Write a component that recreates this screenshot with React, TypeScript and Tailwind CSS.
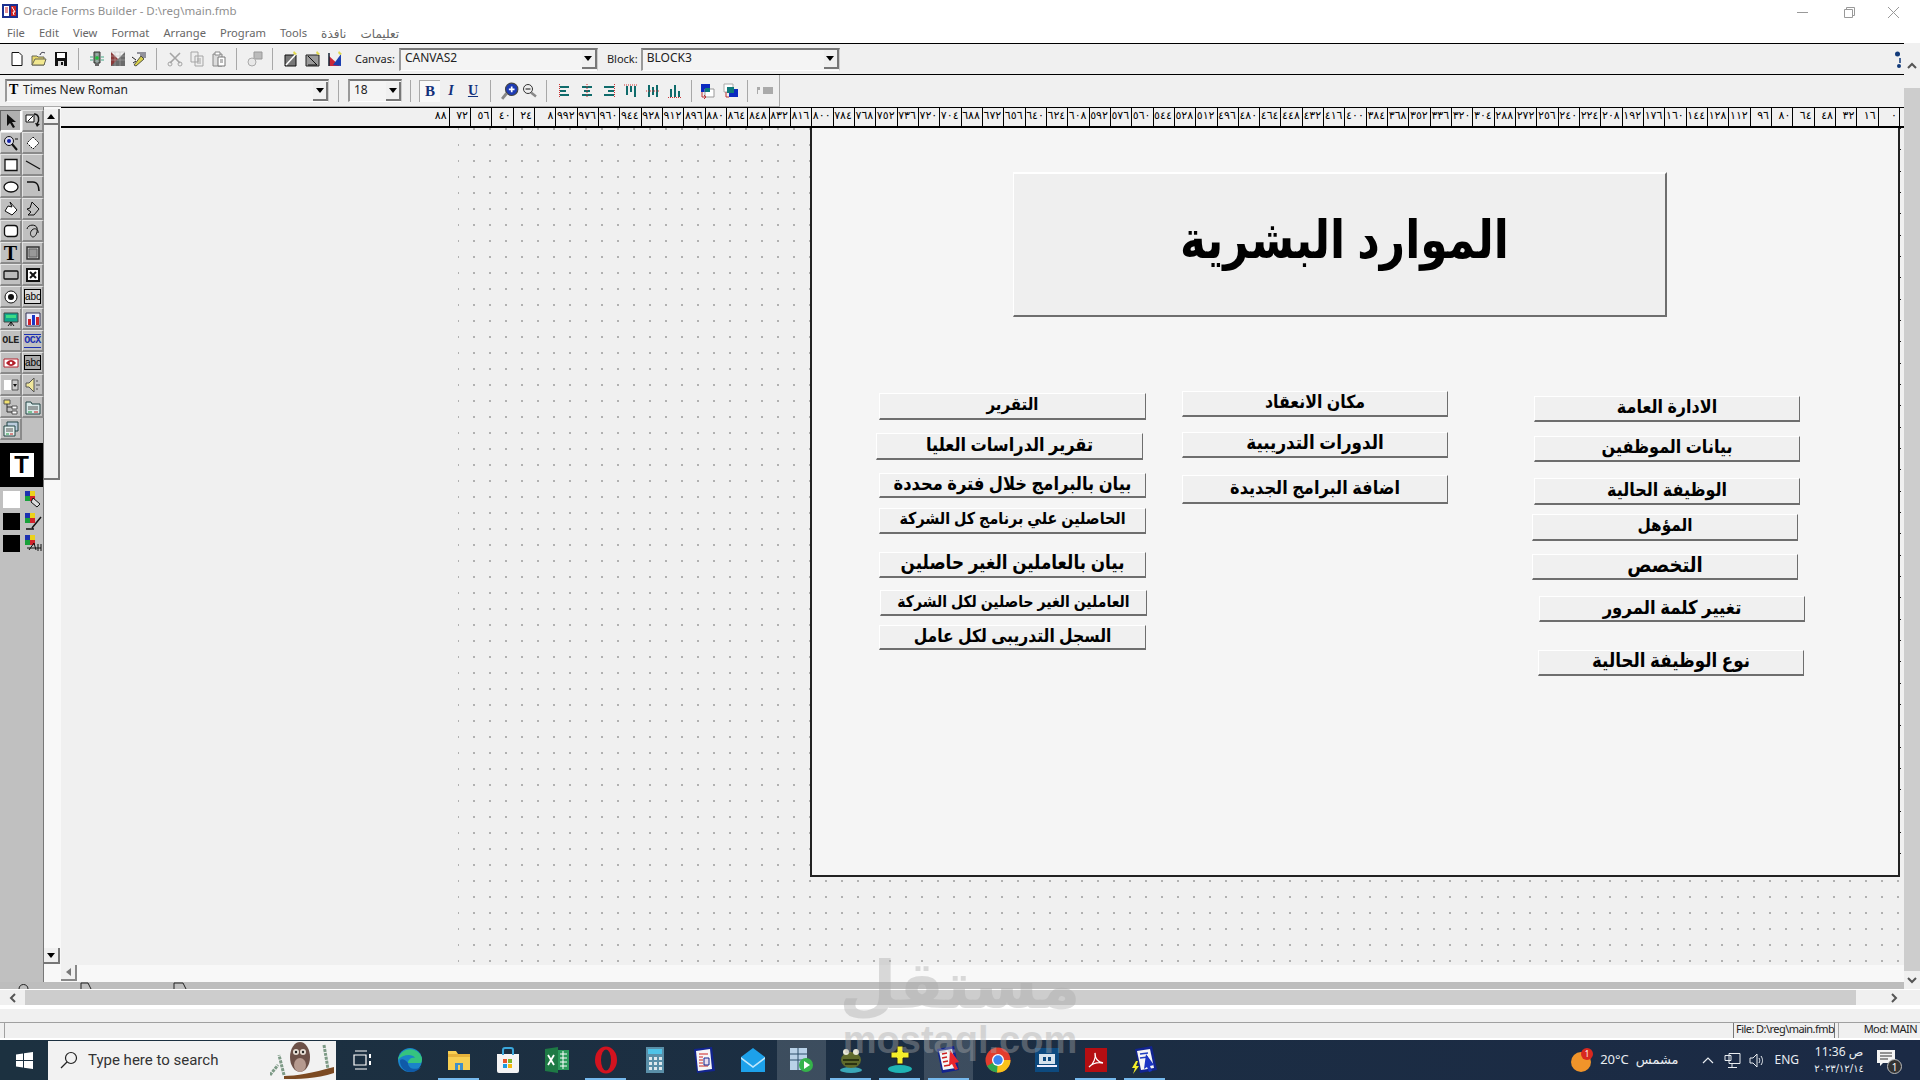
import React from 'react';

const uiFont = "font-['Noto_Sans','DejaVu_Sans',sans-serif]";
const arabicFont = "font-['Liberation_Sans','DejaVu_Sans',sans-serif]";

const toArabicDigits = (value: number) =>
  String(value).replace(/\d/g, (d) => '٠١٢٣٤٥٦٧٨٩'[Number(d)]);

const rulerLabels: string[] = [];
for (let v = 0; v <= 1088; v += 16) {
  rulerLabels.push(toArabicDigits(v >= 1000 ? v % 1000 : v));
}

const Icon: React.FC<{ size?: number; children: React.ReactNode }> = ({ size = 16, children }) => (
  <svg width={size} height={size} viewBox="0 0 16 16" className="shrink-0">
    {children}
  </svg>
);

const Sep: React.FC = () => <div className="w-px h-[22px] bg-[#a8a8a8] shrink-0" />;

const Combo: React.FC<{ text: string; className: string; lead?: React.ReactNode }> = ({ text, className, lead }) => (
  <div className={`flex items-center h-[23px] bg-[#f4f4f4] border-t-2 border-l-2 border-t-[#777] border-l-[#999] border-r border-b border-r-[#ccc] border-b-white shrink-0 ${className}`}>
    {lead}
    <span className="flex-1 pl-1 pb-[3px] text-[12px] text-[#222] whitespace-nowrap">{text}</span>
    <div className="w-[15px] h-[19px] bg-[#f0f0f0] border-b-2 border-r-2 border-b-[#777] border-r-[#777] flex items-center justify-center">
      <svg width="8" height="5" viewBox="0 0 8 5"><path d="M0 0h8L4 5z" fill="#000" /></svg>
    </div>
  </div>
);

/* top toolbar */
const NewIcon = () => <Icon><path d="M3 1.5h7l3 3v10H3z" fill="#fff" stroke="#111" /></Icon>;
const OpenIcon = () => <Icon><path d="M1 5h5l1 1h6v8H1z" fill="#e8d86a" stroke="#665" /><path d="M1 14l3-6h11l-2 6z" fill="#f2e88f" stroke="#665" /><path d="M9 4c1-3 3-3 5-2" fill="none" stroke="#223" /></Icon>;
const SaveIcon = () => <Icon><path d="M2 1h12v14H2z" fill="#111" /><path d="M4 2h8v5H4z" fill="#fff" /><path d="M5 10h6v5H5z" fill="#ddd" /><path d="M8 11h2v3H8z" fill="#111" /></Icon>;
const RunIcon = () => <Icon><path d="M5 1h6v11H5z" fill="#7b8c7b" stroke="#333" /><circle cx="8" cy="3.5" r="1.5" fill="#9aa" /><circle cx="8" cy="7" r="1.8" fill="#19c23b" /><circle cx="8" cy="10.3" r="1.5" fill="#9aa" /><path d="M6 12h4v3H6z" fill="#666" /><path d="M1 6h3M12 6h3M1 9h3M12 9h3" stroke="#4a8" /></Icon>;
const CompileIcon = () => <Icon><path d="M1 1l14 14H1z" fill="#8b3a3a" /><path d="M15 1L1 15h14z" fill="#6b6b6b" /><path d="M1 1h14M1 5h14M1 9h14M5 1v14M10 1v14" stroke="#bbb" strokeWidth=".5" /></Icon>;
const DebugIcon = () => <Icon><path d="M3 14L10 5l3 3-8 7z" fill="#d9d04a" stroke="#554" /><path d="M6 2h9M9 4h6M11 6h4" stroke="#334" /><path d="M1 6l4 3M2 12l3-2" stroke="#222" /></Icon>;
const CutIcon = () => <Icon><path d="M3 2l10 10M13 2L3 12" stroke="#a5a5a5" strokeWidth="1.6" /><circle cx="3" cy="13" r="2" fill="none" stroke="#a5a5a5" /><circle cx="13" cy="13" r="2" fill="none" stroke="#a5a5a5" /></Icon>;
const CopyIcon = () => <Icon><path d="M2 1h7v10H2zM6 5h8v10H6z" fill="#eee" stroke="#a5a5a5" /><path d="M8 8h4M8 10h4M8 12h4" stroke="#a5a5a5" /></Icon>;
const PasteIcon = () => <Icon><path d="M2 3h9v12H2z" fill="#ddd" stroke="#888" /><path d="M4 1h5v3H4z" fill="#fff" stroke="#888" /><path d="M7 6h7v9H7z" fill="#fff" stroke="#777" /><path d="M9 9h3M9 11h3" stroke="#777" /></Icon>;
const LinkIcon = () => <Icon><path d="M7 1h8v7H7z" fill="#bbb" stroke="#999" /><circle cx="5" cy="11" r="4" fill="#e8e8e8" stroke="#aaa" /></Icon>;
const EditAIcon = () => <Icon><path d="M2 4h11v11H2z" fill="#777" stroke="#111" /><path d="M3 14L13 3" stroke="#fff" strokeWidth="1.5" /><path d="M11 0l3 3-2 1-2-2z" fill="#e2d94d" /></Icon>;
const EditBIcon = () => <Icon><path d="M1 4h13v11H1z" fill="#9a9a9a" stroke="#222" /><path d="M3 5l9 9M3 14h9" stroke="#111" /><path d="M12 0l3 3-2 1-2-2z" fill="#e2d94d" /></Icon>;
const EditCIcon = () => <Icon><path d="M2 15V5l11 10z" fill="#c9283a" /><path d="M2 2v13" stroke="#123" strokeWidth="1.5" /><path d="M6 14L14 3v12z" fill="#1c3fb0" /><path d="M12 0l3 3-2 1-2-2z" fill="#e2d94d" /></Icon>;
const HelpIcon = () => <svg width="7" height="18" viewBox="0 0 7 18"><circle cx="3.5" cy="3" r="2.5" fill="#123a7a" /><path d="M6 7v5" stroke="#123a7a" strokeWidth="1.5" /><circle cx="5" cy="15" r="2" fill="#123a7a" /></svg>;

/* second toolbar */
const FontIcon = () => <span className="w-[10px] ml-[2px] pb-[3px] text-[14px] leading-none font-bold font-['Liberation_Serif',serif] text-black shrink-0">T</span>;
const ZoomIn = () => <Icon size={18}><circle cx="9.5" cy="6.5" r="5.5" fill="#1d3bb4" stroke="#444" /><path d="M7 6.5h5M9.5 4v5" stroke="#fff" strokeWidth="1.5" /><path d="M5 10l-4 5" stroke="#888" strokeWidth="2.5" /></Icon>;
const ZoomOut = () => <Icon><circle cx="6" cy="6" r="4.5" fill="#eee" stroke="#333" /><path d="M3.5 6h5" stroke="#111" /><path d="M9 9.5l5 4" stroke="#888" strokeWidth="2.5" /></Icon>;
const Align: React.FC<{ bars: string; line: string }> = ({ bars, line }) => (
  <Icon>
    <path d={bars} fill="#0f6b6b" />
    <path d={line} stroke="#c33" strokeDasharray="1 1" />
  </Icon>
);
const LayerA = () => <Icon><path d="M1 1h9v8H1z" fill="#0b2ac0" /><path d="M5 6h9v8H5z" fill="#fff" stroke="#999" /><path d="M2 9v5h4M4 12l2 2-2 2" fill="none" stroke="#b33" /><path d="M5 5h5v4H5z" fill="#0e7a7a" /></Icon>;
const LayerB = () => <Icon><path d="M1 1h9v8H1z" fill="#fff" stroke="#aaa" /><path d="M6 6h9v8H6z" fill="#0b2ac0" /><path d="M4 4h7v6H4z" fill="#0e7a7a" /><path d="M3 9v5h3" fill="none" stroke="#b33" /></Icon>;
const PmIcon = () => <svg width="18" height="10" viewBox="0 0 18 10"><path d="M1 1h3v3H2v4H1zM7 1h10v7H7z" fill="#aaa" /></svg>;

/* tool palette */
const Cell: React.FC<{ children?: React.ReactNode; pressed?: boolean }> = ({ children, pressed }) => (
  <div className={`w-[22px] h-[22px] flex items-center justify-center border-t border-l border-b-2 border-r-2 ${pressed ? 'border-t-[#666] border-l-[#666] border-b-white border-r-white bg-[#b0b0b0]' : 'border-t-[#e4e4e4] border-l-[#e4e4e4] border-b-[#8a8a8a] border-r-[#8a8a8a]'}`}>
    {children}
  </div>
);

const tools: React.ReactNode[] = [
  <Icon key="0"><path d="M4 1v12l3-3 3 5 2-1-3-5h4z" fill="#111" /></Icon>,
  <Icon key="1"><path d="M1 2h8v7H1z" fill="#fff" stroke="#111" /><path d="M3 8l5-5" stroke="#111" /><path d="M9 1c5 0 6 6 3 10" fill="none" stroke="#111" strokeWidth="1.5" /><path d="M10 10l2 4 3-3z" fill="#111" /></Icon>,
  <Icon key="2"><circle cx="6" cy="6" r="4.5" fill="#dde" stroke="#111" /><circle cx="6" cy="6" r="2" fill="#1422a8" /><path d="M9 9l5 6" stroke="#111" strokeWidth="2" /><path d="M12 4h3" stroke="#111" /></Icon>,
  <Icon key="3"><path d="M8 2l6 6-6 6-6-6z" fill="#fff" stroke="#111" strokeDasharray="2 1" /></Icon>,
  <Icon key="4"><path d="M2 2.5h12v11H2z" fill="#fff" stroke="#111" strokeWidth="1.3" /></Icon>,
  <Icon key="5"><path d="M1 4l14 8" stroke="#111" strokeWidth="1.3" /></Icon>,
  <Icon key="6"><ellipse cx="8" cy="8" rx="7" ry="5" fill="#fff" stroke="#111" strokeWidth="1.3" /></Icon>,
  <Icon key="7"><path d="M2 3h6c4 0 6 4 6 9" fill="none" stroke="#111" strokeWidth="1.6" /></Icon>,
  <Icon key="8"><path d="M7 1l7 8-5 5-7-4 3-5 4 1z" fill="#fff" stroke="#111" /></Icon>,
  <Icon key="9"><path d="M7 1l7 7-5 6H3l3-3-4-3 3-1z" fill="none" stroke="#111" /></Icon>,
  <Icon key="10"><rect x="1.5" y="2.5" width="13" height="11" rx="3" fill="#fff" stroke="#111" strokeWidth="1.3" /></Icon>,
  <Icon key="11"><path d="M2 6c1-5 9-5 10-1 1 5-2 9-4 9S4 10 7 7s7 0 6 3" fill="none" stroke="#111" /></Icon>,
  <span key="12" className="text-[20px] leading-none font-bold font-['Liberation_Serif',serif] text-black">T</span>,
  <Icon key="13"><path d="M2 2h12v12H2z" fill="none" stroke="#333" strokeWidth="1.5" /><path d="M4 4h8v8H4z" fill="#999" stroke="#666" /></Icon>,
  <Icon key="14"><rect x="1" y="4" width="14" height="8" rx="1" fill="#bbb" stroke="#111" strokeWidth="1.3" /></Icon>,
  <Icon key="15"><path d="M2 2h12v12H2z" fill="#fff" stroke="#111" strokeWidth="2" /><path d="M5 5l6 6M11 5l-6 6" stroke="#111" strokeWidth="2" /></Icon>,
  <Icon key="16"><circle cx="8" cy="8" r="6" fill="#fff" stroke="#111" /><circle cx="8" cy="8" r="3" fill="#111" /></Icon>,
  <span key="17" className="w-[17px] border border-black bg-[#ddd] text-[10px] leading-[13px] text-center font-['Liberation_Sans',sans-serif] text-black">abc</span>,
  <Icon key="18"><path d="M1 2h14v9H1z" fill="#11a58c" stroke="#444" /><path d="M3 4h10v3H3z" fill="#3ddc84" /><path d="M8 11l-3 4M8 11l3 4M8 11v4" stroke="#111" /></Icon>,
  <Icon key="19"><path d="M1 2h14v13H1z" fill="#eef" stroke="#335" /><path d="M3 8h3v6H3z" fill="#d1232b" /><path d="M7 4h3v10H7z" fill="#1b35c4" /><path d="M11 6h3v8h-3z" fill="#d1232b" /></Icon>,
  <span key="20" className="text-[10px] leading-none tracking-tighter font-bold font-['Liberation_Mono',monospace] text-[#222]">OLE</span>,
  <span key="21" className="text-[10px] leading-[12px] border-y border-[#1b2fb0] tracking-tighter font-bold font-['Liberation_Mono',monospace] text-[#1b2fb0]">OCX</span>,
  <Icon key="22"><path d="M1 4h14v8H1z" fill="#fff" stroke="#b3202c" /><path d="M3 8c3-4 7-4 10 0-3 4-7 4-10 0z" fill="#b3202c" /><circle cx="8" cy="8" r="1.3" fill="#fff" /></Icon>,
  <span key="23" className="w-[17px] border border-black bg-[#aaa] text-[10px] leading-[13px] text-center font-['Liberation_Sans',sans-serif] text-black">abc</span>,
  <Icon key="24"><path d="M1 3h14v10H1z" fill="#fff" /><path d="M9 3h6v10H9z" fill="#ccc" stroke="#555" /><path d="M10 7h4l-2 3z" fill="#111" /></Icon>,
  <Icon key="25"><path d="M1 6h3l5-5v14l-5-5H1z" fill="#f0e79c" stroke="#555" /><path d="M11 4h2M11 8h4M11 12h2" stroke="#555" /></Icon>,
  <Icon key="26"><path d="M1 1h6v4H1z" fill="#f0e070" stroke="#555" /><path d="M9 7h5v3H9zM9 12h5v3H9z" fill="#fff" stroke="#555" /><path d="M4 5v8h5M4 8h5" fill="none" stroke="#333" /></Icon>,
  <Icon key="27"><path d="M1 3h5l1 2h8v10H1z" fill="#d8e8e8" stroke="#244" /><path d="M3 8h10M3 10h10" stroke="#555" /><path d="M3 13h4" stroke="#1c9a3a" /><path d="M9 13h4" stroke="#c22" /></Icon>,
  <Icon key="28"><path d="M4 1h11v9H4z" fill="#bcd" stroke="#244" /><path d="M1 5h11v10H1z" fill="#e4f0ee" stroke="#244" /><path d="M3 8h7M3 10h7" stroke="#555" /><path d="M3 13h3" stroke="#1c9a3a" /><path d="M7 13h3" stroke="#c22" /></Icon>,
];

const Swatch: React.FC<{ color: string }> = ({ color }) => <div className={`w-[17px] h-[17px] ${color}`} />;
const PaletteIcon: React.FC<{ tool: React.ReactNode }> = ({ tool }) => (
  <svg width="18" height="18" viewBox="0 0 18 18">
    <path d="M1 1h5v5H1z" fill="#1b2fb0" />
    <path d="M6 1h5v5H6z" fill="#ecd21b" />
    <path d="M1 6h5v5H1z" fill="#18a03a" />
    <path d="M6 6h5v5H6z" fill="#d1232b" />
    {tool}
  </svg>
);

/* canvas buttons */
const FormButton: React.FC<{ text: string; className: string }> = ({ text, className }) => (
  <div dir="rtl" className={`absolute flex items-center justify-center pb-[3px] bg-[#f0f0f0] border-t border-l border-t-white border-l-white border-b-2 border-r border-b-[#6e6e6e] border-r-[#6e6e6e] font-bold text-black whitespace-nowrap ${arabicFont} ${className}`}>
    <span className="inline-block scale-y-[1.15]">{text}</span>
  </div>
);

/* taskbar */
const TaskSlot: React.FC<{ children: React.ReactNode; open?: boolean; active?: boolean }> = ({ children, open, active }) => (
  <div className={`relative w-[49px] h-[40px] flex items-center justify-center shrink-0 ${active ? 'bg-[#ffffff26]' : ''}`}>
    {children}
    {open && <div className="absolute bottom-0 left-[4px] right-[4px] h-[2px] bg-[#76b9ed]" />}
  </div>
);

const App: React.FC = () => {
  return (
    <div className={`relative w-[1920px] h-[1080px] overflow-hidden flex flex-col bg-[#f0f0f0] ${uiFont}`}>
      {/* Title bar */}
      <div className="h-[24px] bg-white flex items-center shrink-0 pl-[2px]">
        <svg width="16" height="16" viewBox="0 0 16 16" className="mb-[3px]">
          <path d="M0 1h16v14H0z" fill="#1b2f8f" />
          <path d="M2 3h5v10H2z" fill="#fff" />
          <path d="M3 5h3M3 7h3M3 9h3" stroke="#c22" />
          <path d="M9 3h5v10H9z" fill="#c22" />
          <path d="M10 4l3 5-2 0 1 3" stroke="#fff" fill="none" />
        </svg>
        <span className="ml-[5px] mb-[2px] text-[11.5px] text-[#8f8f8f]">Oracle Forms Builder - D:\reg\main.fmb</span>
        <div className="ml-auto flex items-center">
          <div className="w-[47px] flex justify-center"><svg width="11" height="11" viewBox="0 0 11 11"><path d="M0 5.5h11" stroke="#999" /></svg></div>
          <div className="w-[47px] flex justify-center"><svg width="11" height="11" viewBox="0 0 11 11"><path d="M.5 2.500h8v8h-8zM2.500 2.500v-2h8v8h-2" fill="none" stroke="#999" /></svg></div>
          <div className="w-[47px] pr-[6px] flex justify-center"><svg width="11" height="11" viewBox="0 0 11 11"><path d="M0 0l11 11M11 0L0 11" stroke="#999" /></svg></div>
        </div>
      </div>

      {/* Menu bar */}
      <div className="h-[19px] bg-white flex items-center pl-[7px] gap-[14px] text-[11.2px] text-[#666] shrink-0">
        <span>File</span>
        <span>Edit</span>
        <span>View</span>
        <span>Format</span>
        <span>Arrange</span>
        <span>Program</span>
        <span>Tools</span>
        <span className="text-[12px]">نافذة</span>
        <span className="text-[12px]">تعليمات</span>
      </div>

      <div className="flex h-[946px] shrink-0">
        <div className="w-[1904px] flex flex-col">
          {/* Main toolbar */}
          <div className="relative h-[32px] flex items-center pl-[9px] border-t border-b border-black shrink-0">
            <div className="flex items-center gap-[6px]">
              <NewIcon /><OpenIcon /><SaveIcon />
            </div>
            <div className="ml-[9px] mr-[10px]"><Sep /></div>
            <div className="flex items-center gap-[5px]">
              <RunIcon /><CompileIcon /><DebugIcon />
            </div>
            <div className="ml-[9px] mr-[10px]"><Sep /></div>
            <div className="flex items-center gap-[6px]">
              <CutIcon /><CopyIcon /><PasteIcon />
            </div>
            <div className="ml-[9px] mr-[10px]"><Sep /></div>
            <LinkIcon />
            <div className="ml-[9px] mr-[10px]"><Sep /></div>
            <div className="flex items-center gap-[6px]">
              <EditAIcon /><EditBIcon /><EditCIcon />
            </div>
            <span className="ml-[12px] mr-[4px] text-[11px] text-[#222]">Canvas:</span>
            <Combo text="CANVAS2" className="w-[199px]" />
            <span className="ml-[9px] mr-[3px] text-[11px] text-[#222]">Block:</span>
            <Combo text="BLOCK3" className="w-[199px]" />
            <div className="absolute right-[3px] top-[7px]"><HelpIcon /></div>
          </div>

          {/* Format toolbar */}
          <div className="h-[32px] flex shrink-0">
            <div className="w-[780px] flex items-center pl-[5px] border-r border-b border-r-[#aaa] border-b-[#aaa]">
              <Combo text="Times New Roman" lead={<FontIcon />} className="w-[324px]" />
              <div className="mx-[9px]"><Sep /></div>
              <Combo text="18" className="w-[54px]" />
              <div className="mx-[8px]"><Sep /></div>
              <div className="w-[21px] h-[22px] bg-[#f8f8f8] border-l border-t border-[#aaa] flex items-center justify-center text-[15px] font-bold font-['Liberation_Serif',serif] text-[#12307a]">B</div>
              <div className="w-[22px] text-center text-[14px] italic font-bold font-['Liberation_Serif',serif] text-[#12307a]">I</div>
              <div className="w-[22px] text-center text-[14px] underline font-bold font-['Liberation_Serif',serif] text-[#12307a]">U</div>
              <div className="ml-[6px] mr-[10px]"><Sep /></div>
              <ZoomIn />
              <div className="ml-[3px]"><ZoomOut /></div>
              <div className="mx-[8px]"><Sep /></div>
              <div className="ml-[2px] flex items-center gap-[6px]">
                <Align bars="M3 3h9v2H3zM3 7h6v2H3zM3 11h9v2H3z" line="M2.5 1v14" />
                <Align bars="M3 3h10v2H3zM5 7h6v2H5zM3 11h10v2H3z" line="M8 1v14" />
                <Align bars="M3 3h10v2H3zM7 7h6v2H7zM3 11h10v2H3z" line="M13.5 1v14" />
                <Align bars="M3 3h2v9H3zM7 3h2v6H7zM11 3h2v11h-2z" line="M1 2h14" />
                <Align bars="M3 2h2v12H3zM7 4h2v8H7zM11 2h2v12h-2z" line="M1 8h14" />
                <Align bars="M3 6h2v8H3zM7 2h2v12H7zM11 8h2v6h-2z" line="M1 14.5h14" />
              </div>
              <div className="mx-[8px]"><Sep /></div>
              <div className="flex items-center gap-[7px]">
                <LayerA /><LayerB />
              </div>
              <div className="mx-[8px]"><Sep /></div>
              <PmIcon />
            </div>
          </div>

          {/* Builder workspace */}
          <div className="flex h-[875px] shrink-0">
            {/* Tool palette */}
            <div className="w-[44px] bg-[#c0c0c0] border-r border-r-[#777] shrink-0 pt-[3px]">
              <div className="grid grid-cols-2 w-[44px]">
                {tools.map((tool, i) => (
                  <Cell key={i} pressed={i === 0}>{tool}</Cell>
                ))}
              </div>
              <div className="mt-[3px] h-[44px] bg-black flex items-center justify-center">
                <div className="w-[24px] h-[24px] bg-white flex items-center justify-center text-[24px] leading-none font-black font-['Liberation_Sans',sans-serif] text-black">T</div>
              </div>
              <div className="pl-[3px] pt-[3px] flex flex-col gap-[4px]">
                <div className="flex items-center gap-[4px]">
                  <Swatch color="bg-white" />
                  <PaletteIcon tool={<path d="M9 8l7 6-3 3-6-5z" fill="#ddd" stroke="#111" />} />
                </div>
                <div className="flex items-center gap-[4px]">
                  <Swatch color="bg-black" />
                  <PaletteIcon tool={<path d="M8 16l9-11M2 17h8" stroke="#111" strokeWidth="1.5" />} />
                </div>
                <div className="flex items-center gap-[4px]">
                  <Swatch color="bg-black" />
                  <PaletteIcon tool={<path d="M5 16l5-7 2 7M14 10v7M17 10v7M3 14h14" fill="none" stroke="#111" />} />
                </div>
              </div>
            </div>

            {/* Vertical scroller */}
            <div className="w-[17px] flex flex-col shrink-0 bg-[#f8f8f8]">
              <div className="w-[16px] h-[16px] mt-[2px] bg-[#f0f0f0] border-b-2 border-r-2 border-[#777] flex items-center justify-center">
                <svg width="8" height="5" viewBox="0 0 8 5"><path d="M0 5h8L4 0z" fill="#000" /></svg>
              </div>
              <div className="w-[16px] h-[355px] bg-[#f0f0f0] border-b-2 border-r-2 border-[#777]" />
              <div className="flex-1" />
              <div className="w-[16px] h-[16px] mb-[18px] bg-[#f0f0f0] border-b-2 border-r-2 border-[#777] flex items-center justify-center">
                <svg width="8" height="5" viewBox="0 0 8 5"><path d="M0 0h8L4 5z" fill="#000" /></svg>
              </div>
            </div>

            {/* Ruler and canvas */}
            <div className="flex-1 flex flex-col min-w-0">
              <div className="h-[21px] flex flex-row-reverse border-t border-b-2 border-black pr-[4px] shrink-0 font-['DejaVu_Sans',sans-serif]">
                {rulerLabels.map((label, i) => (
                  <div key={i} className="w-[21.33px] h-full border-r border-black text-right pr-[2px] text-[11px] leading-[16px] text-black whitespace-nowrap overflow-hidden shrink-0">
                    {label}
                  </div>
                ))}
              </div>
              <div className="flex flex-1 min-h-0">
                <div className="w-[397px] shrink-0" />
                <div className="flex-1 min-w-0 bg-[radial-gradient(circle,#222_0.5px,transparent_0.8px)] bg-[size:16px_16px] bg-[position:-8px_9px]">
                  <div className="ml-[352px] w-[1090px] h-[749px] relative bg-[#f5f5f5] border-l-2 border-b-2 border-r-2 border-[#222]">
                    {/* Vertical ruler marks */}
                    <div className="absolute left-full top-0 w-[3px] h-full bg-[repeating-linear-gradient(to_bottom,#222_0_1px,transparent_1px_21.33px)]" />

                    {/* Title block */}
                    <div dir="rtl" className={`absolute left-[201px] top-[44px] w-[654px] h-[145px] flex items-center justify-center pb-[10px] pl-[10px] bg-[#efefef] border-t-2 border-l border-t-white border-l-white border-b-2 border-r-2 border-b-[#6e6e6e] border-r-[#6e6e6e] text-[44px] font-bold text-black ${arabicFont}`}>
                      <span className="inline-block scale-y-[1.2]">الموارد البشرية</span>
                    </div>

                    <FormButton text="التقرير" className="left-[67px] top-[265px] w-[267px] h-[27px] text-[15px]" />
                    <FormButton text="تقرير الدراسات العليا" className="left-[64px] top-[305px] w-[267px] h-[27px] text-[16.2px]" />
                    <FormButton text="بيان بالبرامج خلال فترة محددة" className="left-[67px] top-[345px] w-[267px] h-[25px] text-[16.3px]" />
                    <FormButton text="الحاصلين علي برنامج كل الشركة" className="left-[67px] top-[380px] w-[267px] h-[26px] text-[14.3px]" />
                    <FormButton text="بيان بالعاملين الغير حاصلين" className="left-[67px] top-[424px] w-[267px] h-[26px] text-[16.8px]" />
                    <FormButton text="العاملين الغير حاصلين لكل الشركة" className="left-[68px] top-[462px] w-[267px] h-[26px] text-[14px]" />
                    <FormButton text="السجل التدريبى لكل عامل" className="left-[67px] top-[497px] w-[267px] h-[25px] text-[15.6px]" />

                    <FormButton text="مكان الانعقاد" className="left-[370px] top-[263px] w-[266px] h-[26px] text-[15.8px]" />
                    <FormButton text="الدورات التدريبية" className="left-[370px] top-[304px] w-[266px] h-[26px] text-[16.8px]" />
                    <FormButton text="اضافة البرامج الجديدة" className="left-[370px] top-[347px] w-[266px] h-[29px] text-[16.2px]" />

                    <FormButton text="الادارة العامة" className="left-[722px] top-[268px] w-[266px] h-[26px] text-[16px]" />
                    <FormButton text="بيانات الموظفين" className="left-[722px] top-[308px] w-[266px] h-[26px] text-[16px]" />
                    <FormButton text="الوظيفة الحالية" className="left-[722px] top-[350px] w-[266px] h-[27px] text-[16px]" />
                    <FormButton text="المؤهل" className="left-[720px] top-[386px] w-[266px] h-[27px] text-[15.3px]" />
                    <FormButton text="التخصص" className="left-[720px] top-[426px] w-[266px] h-[26px] text-[18px]" />
                    <FormButton text="تغيير كلمة المرور" className="left-[727px] top-[468px] w-[266px] h-[26px] text-[16.5px]" />
                    <FormButton text="نوع الوظيفة الحالية" className="left-[726px] top-[522px] w-[266px] h-[26px] text-[16.7px]" />
                  </div>
                </div>
              </div>
              {/* Inner horizontal scroller */}
              <div className="h-[17px] bg-[#f8f8f8] shrink-0">
                <div className="w-[16px] h-[16px] bg-[#f0f0f0] border-b-2 border-r-2 border-[#888] flex items-center justify-center">
                  <svg width="5" height="8" viewBox="0 0 5 8"><path d="M5 0v8L0 4z" fill="#777" /></svg>
                </div>
              </div>
            </div>
          </div>

          <div className="relative h-[7px] bg-[#bdbdbd] shrink-0 overflow-hidden">
            <svg width="200" height="7" viewBox="0 0 200 7" className="absolute left-0 top-0">
              <path d="M19 7c0-6 9-6 9 0M81 7V1h7l3 6M174 7V1h9l3 6" fill="none" stroke="#222" />
            </svg>
          </div>
        </div>

        {/* Window scrollbar */}
        <div className="w-[16px] flex flex-col bg-[#f0f0f0]">
          <div className="h-[45px] flex items-center justify-center">
            <svg width="10" height="7" viewBox="0 0 10 7"><path d="M1 6l4-4 4 4" fill="none" stroke="#555" strokeWidth="2" /></svg>
          </div>
          <div className="flex-1 bg-[#cdcdcd]" />
          <div className="h-[18px] flex items-center justify-center">
            <svg width="10" height="7" viewBox="0 0 10 7"><path d="M1 1l4 4 4-4" fill="none" stroke="#555" strokeWidth="2" /></svg>
          </div>
        </div>
      </div>

      {/* Page scrollbar */}
      <div className="h-[1px] bg-white shrink-0" />
      <div className="h-[15px] flex shrink-0">
        <div className="w-[25px] flex items-center justify-center">
          <svg width="7" height="10" viewBox="0 0 7 10"><path d="M6 1L2 5l4 4" fill="none" stroke="#555" strokeWidth="2" /></svg>
        </div>
        <div className="w-[1831px] bg-[#cdcdcd]" />
        <div className="flex-1 flex items-center justify-end pr-[22px]">
          <svg width="7" height="10" viewBox="0 0 7 10"><path d="M1 1l4 4-4 4" fill="none" stroke="#555" strokeWidth="2" /></svg>
        </div>
      </div>
      <div className="h-[4px] bg-white shrink-0" />

      {/* Status bar */}
      <div className="h-[14px] shrink-0 border-b border-[#a0a0a0]" />
      <div className="h-[15px] flex items-center pl-[4px] pr-[3px] shrink-0 text-[11px] text-[#222] leading-none">
        <div className="w-[1729px] h-full border-l border-[#a0a0a0]" />
        <div className="w-[102px] h-full border-l border-r border-[#777] pl-[2px] tracking-tighter whitespace-nowrap">File: D:\reg\main.fmb</div>
        <div className="ml-[3px] flex-1 h-full border-l border-[#aaa] text-right tracking-tighter whitespace-nowrap">Mod: MAIN</div>
      </div>
      <div className="h-[2px] bg-white shrink-0" />

      {/* Windows taskbar */}
      <div className="h-[40px] flex items-center bg-gradient-to-r from-[#1c3140] to-[#1b2a45] shrink-0">
        <div className="w-[48px] flex justify-center shrink-0">
          <svg width="17" height="17" viewBox="0 0 17 17"><path d="M0 2.500l7-1v6.500H0zM8 1.300L17 0v8H8zM0 9h7v6.500l-7-1zM8 9h9v8l-9-1.300z" fill="#fff" /></svg>
        </div>
        <div className="relative w-[288px] h-[39px] bg-[#f2f2f2] flex items-center pl-[12px] shrink-0 overflow-hidden">
          <svg width="18" height="18" viewBox="0 0 18 18"><circle cx="11" cy="7" r="5.500" fill="none" stroke="#222" strokeWidth="1.200" /><path d="M7 11l-6 6" stroke="#222" strokeWidth="1.200" /></svg>
          <span className="ml-[10px] text-[15px] text-[#333] font-['Roboto',sans-serif]">Type here to search</span>
          <svg width="66" height="40" viewBox="0 0 66 40" className="absolute right-0 top-0">
            <path d="M0 34l8-10M14 34L9 14M54 4l4 24" stroke="#7d9a86" strokeWidth="3" strokeDasharray="3 1" />
            <path d="M14 35c12 0 28-3 50-9v6c-18 6-36 6-50 6z" fill="#7c4a22" />
            <ellipse cx="30" cy="16" rx="10" ry="15" fill="#6d5148" />
            <circle cx="26" cy="11" r="3" fill="#e6ddd4" />
            <circle cx="33" cy="11" r="3" fill="#e6ddd4" />
            <circle cx="26" cy="11" r="1.200" fill="#222" />
            <circle cx="33" cy="11" r="1.200" fill="#222" />
            <ellipse cx="30" cy="24" rx="6" ry="7" fill="#b69a8f" />
          </svg>
        </div>

        <TaskSlot>
          <svg width="20" height="20" viewBox="0 0 20 20"><path d="M4 1h12M4 19h12M3 5h12v10H3z" fill="none" stroke="#fff" strokeWidth="1.200" /><path d="M18 4h2v4h-2zM18 11h2v4h-2z" fill="#fff" /></svg>
        </TaskSlot>
        <TaskSlot>
          <svg width="26" height="26" viewBox="0 0 26 26"><circle cx="13" cy="13" r="12" fill="#1a83c9" /><path d="M1 13C2 4 14-2 22 6c3 3 4 7 2 10H11c0-4 4-6 7-5-3-5-13-3-17 2z" fill="#35c37f" /><path d="M11 16c0 5 6 8 13 4-3 4-7 5-10 5-7 0-11-6-11-11 0-2 4-3 8 2z" fill="#0f5aa8" /></svg>
        </TaskSlot>
        <TaskSlot open>
          <svg width="24" height="22" viewBox="0 0 24 22"><path d="M1 2h8l2 3h12v16H1z" fill="#f7cf52" /><path d="M1 5h22v3H1z" fill="#e5b23a" /><path d="M8 14h8v7H8z" fill="#3f8fc9" /><path d="M11 16h2v5h-2z" fill="#f7cf52" /></svg>
        </TaskSlot>
        <TaskSlot>
          <svg width="24" height="26" viewBox="0 0 24 26"><path d="M1 7h22v17a2 2 0 0 1-2 2H3a2 2 0 0 1-2-2z" fill="#f4f4f4" /><path d="M7 8V3a2 2 0 0 1 2-2h6a2 2 0 0 1 2 2v5" fill="none" stroke="#3ba8dc" strokeWidth="2" /><path d="M7 12h4v4H7z" fill="#e8562a" /><path d="M12 12h4v4h-4z" fill="#7eb72b" /><path d="M7 17h4v4H7z" fill="#1a9be0" /><path d="M12 17h4v4h-4z" fill="#f5b90a" /></svg>
        </TaskSlot>
        <TaskSlot>
          <svg width="24" height="26" viewBox="0 0 24 26"><path d="M0 2l13-2v26L0 24z" fill="#1e7a45" /><path d="M13 3h11v20H13z" fill="#2b9a5b" /><path d="M15 7h7M15 11h7M15 15h7M15 19h7M18 4v18" stroke="#fff" /><path d="M3 8l6 10M9 8l-6 10" stroke="#fff" strokeWidth="1.800" /></svg>
        </TaskSlot>
        <TaskSlot open>
          <svg width="24" height="28" viewBox="0 0 24 28"><ellipse cx="12" cy="14" rx="11" ry="13.500" fill="#d3131f" /><ellipse cx="12" cy="14" rx="5" ry="10.500" fill="#1c2d3c" /></svg>
        </TaskSlot>
        <TaskSlot>
          <svg width="18" height="26" viewBox="0 0 18 26"><path d="M0 0h18v26H0z" fill="#5a8fa8" /><path d="M2 2h14v5H2z" fill="#4fc3e8" /><path d="M3 10h3v3H3zM8 10h3v3H8zM13 10h3v3h-3zM3 15h3v3H3zM8 15h3v3H8zM13 15h3v3h-3zM3 20h3v3H3zM8 20h3v3H8zM13 20h3v3h-3z" fill="#dfe9ee" /></svg>
        </TaskSlot>
        <TaskSlot>
          <svg width="22" height="26" viewBox="0 0 22 26"><path d="M1 2l18-2 3 24-18 2z" fill="#12248f" /><path d="M3 4l14-2 2 20-14 2z" fill="#f6f6f6" /><path d="M6 7h9M6 10h4M6 13h4M6 16h4M6 19h9" stroke="#c22" /><path d="M11 11h5v7h-5z" fill="#e8ddef" stroke="#12248f" /></svg>
        </TaskSlot>
        <TaskSlot>
          <svg width="26" height="26" viewBox="0 0 26 26"><path d="M1 10L13 1l12 9v15H1z" fill="#1da1ea" /><path d="M1 10l12 9 12-9v2L13 21 1 12z" fill="#bfe6fb" /></svg>
        </TaskSlot>
        <TaskSlot active>
          <svg width="26" height="26" viewBox="0 0 26 26"><path d="M1 1h17v22H1z" fill="#b9d2e8" /><path d="M1 7h17M1 13h17M9 1v22" stroke="#2d4f6a" /><circle cx="17" cy="18" r="7" fill="#35b34a" /><path d="M15 14l6 4-6 4z" fill="#fff" /></svg>
        </TaskSlot>
        <TaskSlot open>
          <svg width="26" height="28" viewBox="0 0 26 28"><ellipse cx="13" cy="24" rx="11" ry="3" fill="#3aa7b8" /><ellipse cx="13" cy="14" rx="10" ry="8" fill="#5f6a2c" /><circle cx="8" cy="6" r="3" fill="#e8e8d8" /><circle cx="18" cy="6" r="3" fill="#e8e8d8" /><path d="M5 14h16M7 18h12" stroke="#2b3312" strokeWidth="2" /></svg>
        </TaskSlot>
        <TaskSlot open>
          <svg width="26" height="28" viewBox="0 0 26 28"><path d="M10 0h6v6h6v6h-6v6h-6v-6H4V6h6z" fill="#f5ee2a" stroke="#222" /><ellipse cx="13" cy="23" rx="12" ry="4" fill="#1fb3b3" /></svg>
        </TaskSlot>
        <TaskSlot active open>
          <svg width="26" height="28" viewBox="0 0 26 28"><path d="M1 3l17-3 5 24-17 3z" fill="#12248f" /><path d="M3 5l13-2 4 19-13 2z" fill="#f6f6f6" /><path d="M6 8l5-1M6 12l5-1M7 16l5-1M8 20l6-1" stroke="#c22" strokeWidth="1.500" /><path d="M14 4l9 12-4 1 3 6-3 1-3-6-3 2z" fill="#e8262d" /></svg>
        </TaskSlot>
        <TaskSlot>
          <svg width="26" height="26" viewBox="0 0 26 26"><circle cx="13" cy="13" r="12.500" fill="#e23d2e" /><path d="M13 13L2 19a12.500 12.500 0 0 0 11 6.500z" fill="#2fa84f" /><path d="M13 13l-1 12.500A12.500 12.500 0 0 0 25.500 13z" fill="#f9c31a" /><circle cx="13" cy="13" r="6" fill="#fff" /><circle cx="13" cy="13" r="4.700" fill="#3c84ee" /></svg>
        </TaskSlot>
        <TaskSlot>
          <svg width="24" height="28" viewBox="0 0 24 28"><path d="M0 2h24v24H0z" fill="#0d4a7f" /><path d="M4 8h16v10H4z" fill="#d5e2ec" /><path d="M2 19h20v2H2z" fill="#eef" /><path d="M8 11h3v4H8zM13 11h3v4h-3z" fill="#0d4a7f" /></svg>
        </TaskSlot>
        <TaskSlot open>
          <svg width="22" height="26" viewBox="0 0 22 26"><path d="M0 1h22v24H0z" fill="#b50e12" /><path d="M4 20c5-3 7-10 6-14 0 5 3 9 8 10-5-1-10 0-14 4z" fill="none" stroke="#fff" strokeWidth="1.300" /></svg>
        </TaskSlot>
        <TaskSlot open>
          <svg width="26" height="28" viewBox="0 0 26 28"><path d="M3 3l17-3 5 24-17 3z" fill="#12248f" /><path d="M5 5l13-2 4 19-13 2z" fill="#f6f6f6" /><path d="M8 8l8-1M8 12l8-1" stroke="#1f3ec0" strokeWidth="1.500" /><path d="M14 8l8 11-4 1 2 5-3 1-2-5-3 2z" fill="#1b35c4" /><path d="M4 15l-4 7h3l-2 6 6-8H4l2-5z" fill="#f5ee2a" /></svg>
        </TaskSlot>

        <div className="ml-auto flex items-center text-[#e9edf1] shrink-0">
          <div className="relative w-[20px] h-[24px] mr-[9px]">
            <div className="absolute left-0 top-[4px] w-[20px] h-[20px] rounded-full bg-[#f0942a]" />
            <div className="absolute right-[-2px] top-0 w-[12px] h-[12px] rounded-full bg-[#d8281f] flex items-center justify-center text-[8px] leading-none text-white">1</div>
          </div>
          <span className="text-[13px]">20°C</span>
          <span className="ml-[7px] text-[13px]">مشمس</span>
          <svg width="12" height="8" viewBox="0 0 12 8" className="ml-[24px]"><path d="M1 7l5-5 5 5" fill="none" stroke="#e9edf1" strokeWidth="1.200" /></svg>
          <svg width="17" height="17" viewBox="0 0 17 17" className="ml-[10px]"><path d="M5 1.500h11v10H5zM1 3.500h6v5H1zM8 11.500v4M4 15.500h9" fill="#1b2a45" stroke="#e9edf1" /></svg>
          <svg width="17" height="15" viewBox="0 0 17 15" className="ml-[8px]"><path d="M1 5h3l4-4v13l-4-4H1z" fill="none" stroke="#e9edf1" /><path d="M10 5c1 2 1 3 0 5M12 3c2 3 2 6 0 9" fill="none" stroke="#e9edf1" /></svg>
          <span className="ml-[8px] text-[12px]">ENG</span>
          <div className="ml-[17px] w-[46px] flex flex-col items-center text-[12px] leading-[17px] whitespace-nowrap">
            <span dir="rtl">ص 11:36</span>
            <span className="text-[10px] font-['DejaVu_Sans',sans-serif] tracking-tighter">{toArabicDigits(2023)}/{toArabicDigits(12)}/{toArabicDigits(14)}</span>
          </div>
          <div className="relative w-[20px] h-[20px] ml-[15px] mr-[23px]">
            <svg width="18" height="16" viewBox="0 0 18 16"><path d="M0 0h18v13H6l-3 3v-3H0z" fill="#f4f4f4" /><path d="M3 3h12M3 6h12M3 9h8" stroke="#333" /></svg>
            <div className="absolute right-[-5px] bottom-[-4px] w-[15px] h-[15px] rounded-full bg-[#333] border border-[#bbb] flex items-center justify-center text-[10px] leading-none text-white">1</div>
          </div>
        </div>
      </div>

      {/* mostaql watermark */}
      <div className="absolute left-[845px] top-[952px] w-[230px] pointer-events-none flex flex-col items-center text-[#aaaaaa] opacity-40">
        <span dir="rtl" className={`text-[66px] leading-[66px] font-bold ${arabicFont}`}>مستقل</span>
        <span className="mt-[8px] text-[38px] leading-[28px] font-bold font-['Liberation_Sans',sans-serif]">mostaql.com</span>
      </div>
    </div>
  );
};

export default App;
